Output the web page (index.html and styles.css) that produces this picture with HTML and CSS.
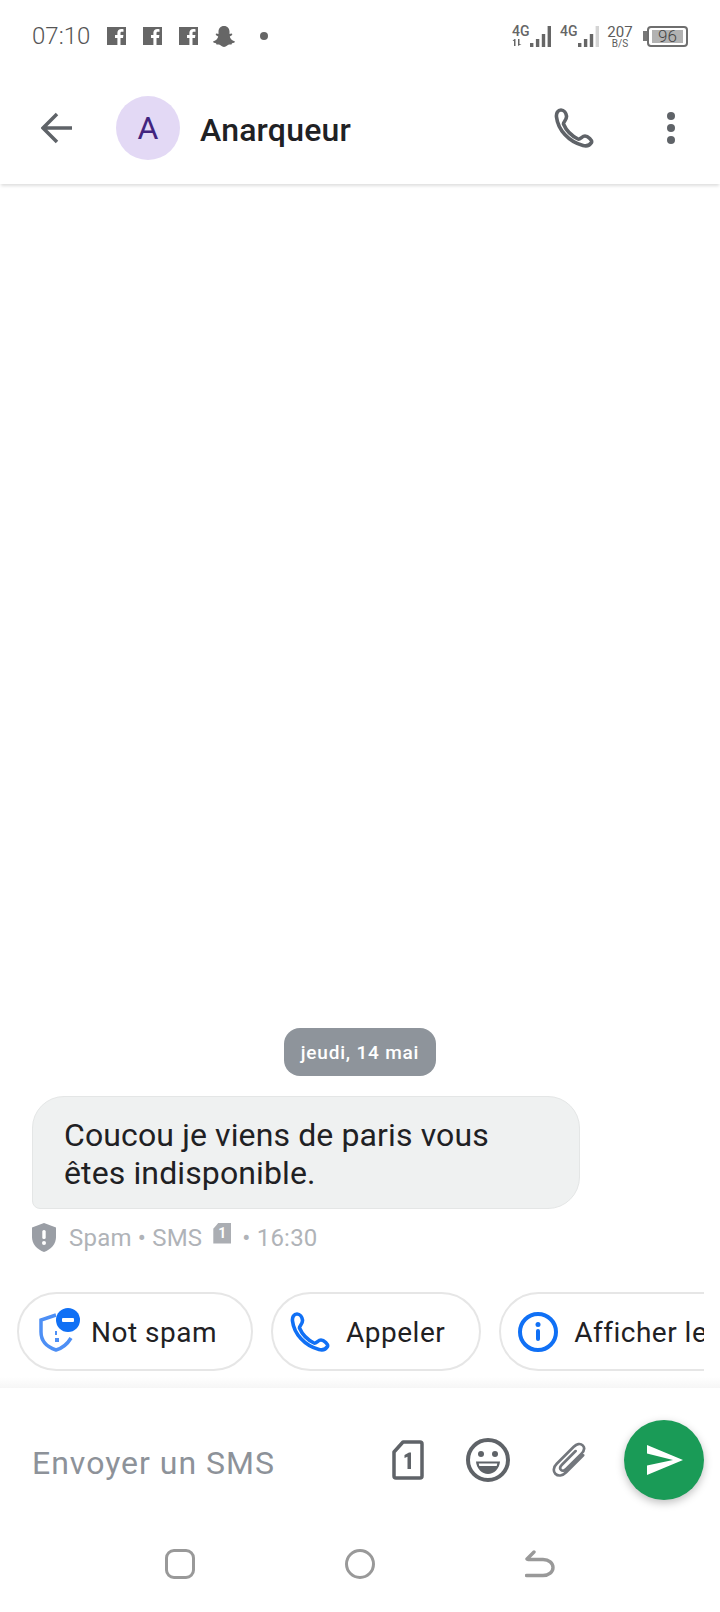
FILE: index.html
```html
<!DOCTYPE html>
<html lang="fr">
<head>
<meta charset="utf-8">
<title>Anarqueur</title>
<link rel="stylesheet" href="styles.css">
</head>
<body>
<svg class="defs" width="0" height="0" aria-hidden="true">
  <symbol id="phone" viewBox="0 0 40 40">
    <path d="M7 2C4 2 2 5 2.500 9C4 22 15 34 29 37.500C33 38.500 36 37 37.500 34.500C38.500 32.500 34 28 31 28C28 28 26 32 24 31C18 28 12 22 9.500 16C9 14 13 12 12.500 8C12 5 10 2 7 2Z" fill="none" stroke="currentColor" stroke-width="3.600" stroke-linejoin="round"/>
  </symbol>
  <symbol id="fb" viewBox="0 0 19 18">
    <path d="M0 0H19V18H13.500V11H16L16.400 8H13.500V6.200C13.500 5.300 13.800 4.800 15 4.800H16.500V2.200C16 2.100 15.200 2 14.300 2C12 2 10.400 3.400 10.400 5.800V8H8V11H10.400V18H0Z" fill="currentColor"/>
  </symbol>
</svg>
<div class="screen">
  <div class="status">
    <span class="time">07:10</span>
    <div class="notifs">
      <svg class="fb"><use href="#fb"/></svg>
      <svg class="fb"><use href="#fb"/></svg>
      <svg class="fb"><use href="#fb"/></svg>
      <svg class="snap" viewBox="0 0 22 21"><path d="M11 0C14.600 0 16.500 2.500 16.500 5.500V8L18.500 7.500C19.500 7.500 19.500 9 18.500 9.500L16.800 10.500C17.200 12.800 19 14.500 21.500 15.300C22.200 15.600 22 16.300 21 16.700L19 17.200L18.500 18.600L16 18.500C14.500 18.500 13.500 21 11 21C8.500 21 7.500 18.500 6 18.500L3.500 18.600L3 17.200L1 16.700C0 16.300 -.2 15.600 .5 15.300C3 14.500 4.800 12.800 5.200 10.500L3.500 9.500C2.500 9 2.500 7.500 3.500 7.500L5.500 8V5.500C5.500 2.500 7.400 0 11 0Z" fill="currentColor"/></svg>
      <span class="notif-dot"></span>
    </div>
    <div class="sys">
      <div class="net">
        <div class="net-label"><span>4G</span><svg class="arrows" viewBox="0 0 10 7"><path d="M2.500 0L.5 2H2V7H3.500V0ZM6 0V7L9.500 5H7.500V0Z" fill="currentColor"/></svg></div>
        <svg class="bars" viewBox="0 0 21 21"><rect x="0" y="17" width="3.400" height="4"/><rect x="5.900" y="13" width="3.400" height="8"/><rect x="11.800" y="8" width="3.400" height="13"/><rect x="17.600" y="0" width="3.400" height="21"/></svg>
      </div>
      <div class="net">
        <div class="net-label"><span>4G</span><i class="arrows-empty"></i></div>
        <svg class="bars" viewBox="0 0 21 21"><rect x="0" y="17" width="3.400" height="4"/><rect x="5.900" y="13" width="3.400" height="8"/><rect x="11.800" y="8" width="3.400" height="13"/><rect class="off" x="17.600" y="0" width="3.400" height="21"/></svg>
      </div>
      <div class="speed"><span class="speed-val">207</span><span class="speed-unit">B/S</span></div>
      <div class="battery"><i class="nub"></i><div class="cell"><span class="level">96</span></div></div>
    </div>
  </div>

  <header class="header">
    <svg class="back" viewBox="0 0 32 32"><path d="M31 16H3M16 2L2 16L16 30" fill="none" stroke="currentColor" stroke-width="3.500"/></svg>
    <div class="avatar">A</div>
    <div class="name">Anarqueur</div>
    <svg class="call"><use href="#phone"/></svg>
    <div class="more"><i></i><i></i><i></i></div>
  </header>

  <main class="chat">
    <div class="date">jeudi, 14 mai</div>
    <div class="bubble">Coucou je viens de paris vous êtes indisponible.</div>
    <div class="meta">
      <svg class="shield" viewBox="0 0 24 29"><path d="M12 0L24 4.500V14C24 21 19 26.500 12 29C5 26.500 0 21 0 14V4.500Z" fill="currentColor"/><rect x="10.300" y="7" width="3.400" height="9" rx="1.500" fill="#fff"/><circle cx="12" cy="20" r="2" fill="#fff"/></svg>
      <span>Spam • SMS</span>
      <span class="sim-mini">1</span>
      <span>• 16:30</span>
    </div>
  </main>

  <div class="chips">
    <div class="chip">
      <svg class="chip-shield" viewBox="0 0 44 44"><path d="M20 7L5 12V24C5 33 11 39 20 42C27 40 32 35 35 30" fill="none" stroke="#4d8ff5" stroke-width="3.500"/><rect x="19" y="23" width="2" height="4" fill="#4d8ff5"/><rect x="19" y="30" width="4" height="4" fill="#4d8ff5"/><circle cx="32" cy="12" r="12" fill="#1070f5"/><rect x="26" y="10" width="12" height="4" rx="1" fill="#fff"/></svg>
      <span class="chip-label">Not spam</span>
    </div>
    <div class="chip">
      <svg class="chip-phone"><use href="#phone"/></svg>
      <span class="chip-label">Appeler</span>
    </div>
    <div class="chip">
      <svg class="chip-info" viewBox="0 0 40 40"><circle cx="20" cy="20" r="18" fill="none" stroke="currentColor" stroke-width="4"/><circle cx="20" cy="12.500" r="2.500" fill="currentColor"/><rect x="18" y="17" width="4" height="12" rx="2" fill="currentColor"/></svg>
      <span class="chip-label">Afficher les détails</span>
    </div>
  </div>
  <div class="fade"></div>

  <div class="composer">
    <span class="placeholder">Envoyer un SMS</span>
    <svg class="tool-sim" viewBox="0 0 32 40"><path d="M11 2H28C29.100 2 30 2.900 30 4V36C30 37.100 29.100 38 28 38H4C2.900 38 2 37.100 2 36V12Z" fill="none" stroke="currentColor" stroke-width="3.500" stroke-linejoin="round"/><path d="M12.500 15L17 12.500H19V29H15.500V16.800L12.500 18Z" fill="currentColor"/></svg>
    <svg class="tool-emoji" viewBox="0 0 44 44"><circle cx="22" cy="22" r="20" fill="none" stroke="currentColor" stroke-width="4"/><circle cx="15" cy="16" r="3" fill="currentColor"/><circle cx="29" cy="16" r="3" fill="currentColor"/><path d="M10 23.500H34C33.500 30.500 28 36 22 36C16 36 10.500 30.500 10 23.500Z" fill="currentColor"/><path d="M12.700 25.500H31.300L30.700 28H13.300Z" fill="#fff"/></svg>
    <svg class="tool-clip" viewBox="0 0 36 40"><path d="M33 15L15 33C11 37 6.500 37.500 3.500 34.500C1 32 1.500 27.500 5 24L23 6C26 3 30 2 32.500 4.500C35 7 34 10.500 31 13.500L15 29.500C13 31.500 11 32 9.500 30.500C8 29 8.500 27 10.500 25L25 10.500" fill="none" stroke="currentColor" stroke-width="2.800" stroke-linecap="round"/></svg>
    <div class="send">
      <svg class="send-arrow" viewBox="0 0 36 30"><path d="M0 0L36 15L0 30V20.500L26 15L0 8.500Z" fill="#fff"/></svg>
    </div>
  </div>

  <nav class="nav">
    <span class="nav-square"></span>
    <span class="nav-circle"></span>
    <svg class="nav-back" viewBox="0 0 30 30"><path d="M1.500 26.500H18C24 26.500 28 23 28 18.500C28 14 24 10.500 18 10.500H3M9 3L2 10" fill="none" stroke="currentColor" stroke-width="3.400" stroke-linecap="round"/></svg>
  </nav>
</div>
</body>
</html>
```
FILE: styles.css
```css
* { box-sizing: border-box; }
html, body { margin: 0; padding: 0; background: #fff; }
body { font-family: Roboto, "Liberation Sans", sans-serif; color: #1f2124; }
.defs { position: absolute; }
.screen { width: 720px; height: 1612px; display: flex; flex-direction: column; overflow: hidden; }

.status { height: 72px; flex: none; display: flex; align-items: center; padding: 0 32px; color: #666; }
.time { font-size: 24px; font-weight: 300; width: 75px; color: #555; }
.notifs { display: flex; align-items: center; gap: 17px; flex: 1; }
.fb { width: 19px; height: 18px; }
.snap { width: 22px; height: 21px; margin-left: -2px; }
.notif-dot { width: 8px; height: 8px; border-radius: 50%; background: #666; margin-left: 8px; }
.sys { display: flex; align-items: center; }
.net { display: flex; align-items: flex-end; margin-right: 9px; }
.net-label { width: 18px; height: 22px; display: flex; flex-direction: column; font-size: 14px; font-weight: 500; line-height: 13px; }
.arrows { width: 10px; height: 7px; margin-top: 1px; }
.arrows-empty { display: block; height: 7px; }
.bars { width: 21px; height: 21px; fill: #666; }
.bars .off { fill: #d4d4d4; }
.speed { width: 24px; display: flex; flex-direction: column; align-items: center; margin-right: 11px; line-height: 1; color: #5c5c5c; }
.speed-val { font-size: 15px; line-height: 14px; }
.speed-unit { font-size: 10px; line-height: 9px; }
.battery { display: flex; align-items: center; }
.nub { width: 4px; height: 10px; background: #777; }
.cell { width: 41px; height: 21px; border: 2px solid #6e6e6e; border-radius: 4px; padding: 2px 3px; display: flex; }
.level { flex: 1; background: #b2b2b2; color: #444; font-size: 17px; font-weight: 300; line-height: 13px; text-align: center; }

.header { height: 112px; flex: none; display: flex; align-items: center; padding-left: 41px; background: #fff; box-shadow: 0 3px 3px -1px rgba(0,0,0,.13); position: relative; }
.back { width: 32px; height: 32px; color: #5f6368; }
.avatar { width: 64px; height: 64px; border-radius: 50%; background: #e3d9f5; color: #42247f; font-size: 32px; display: flex; align-items: center; justify-content: center; margin-left: 43px; }
.name { font-size: 32px; font-weight: 500; margin-left: 20px; margin-top: 3px; flex: 1; letter-spacing: .2px; }
.call { width: 40px; height: 40px; color: #5f6368; margin-right: 73px; }
.more { display: flex; flex-direction: column; gap: 4px; margin-right: 45px; }
.more i { width: 8px; height: 8px; border-radius: 50%; background: #5f6368; }

.chat { flex: 1; display: flex; flex-direction: column; justify-content: flex-end; padding: 0 32px 40px; }
.date { align-self: center; height: 48px; padding: 0 17px; border-radius: 16px; background: #8e949b; color: #fff; font-size: 19px; font-weight: 500; letter-spacing: .8px; display: flex; align-items: center; }
.bubble { width: 548px; margin-top: 20px; padding: 19px 31px 16px; border: 1.500px solid #e4e6e6; border-radius: 32px 32px 32px 8px; background: #eff1f1; font-size: 32px; line-height: 38px; letter-spacing: .12px; }
.meta { display: flex; align-items: center; gap: 11px; margin-top: 14px; height: 29px; color: #b0b3b8; font-size: 24px; letter-spacing: .2px; }
.shield { width: 24px; height: 29px; margin-right: 2px; color: #9a9ea5; }
.sim-mini { width: 18px; height: 21px; margin-top: -9px; background: #abaeb3; color: #fff; font-size: 14px; font-weight: 700; text-align: center; line-height: 21px; clip-path: polygon(30% 0, 100% 0, 100% 100%, 0 100%, 0 30%); }

.chips { flex: none; display: flex; gap: 18px; margin: 0 16px 0 17px; overflow: hidden; height: 79px; }
.chip { flex: none; height: 79px; display: flex; align-items: center; padding: 0 34px 0 17px; border: 2px solid #e6e6e6; border-radius: 40px; background: #fff; font-size: 28px; letter-spacing: .5px; white-space: nowrap; gap: 16px; }
.chip-label { padding-top: 2px; }
.chip-shield { width: 44px; height: 44px; margin-top: -4px; margin-right: -5px; }
.chip-phone { width: 40px; height: 40px; color: #1070f5; }
.chip-info { width: 40px; height: 40px; color: #1070f5; }

.fade { flex: none; height: 11px; margin-top: 6px; background: linear-gradient(#fff, #f6f6f6); }

.composer { flex: none; height: 132px; padding: 12px 16px 0 32px; display: flex; align-items: center; }
.placeholder { font-size: 32px; letter-spacing: 1px; color: #8d9299; flex: 1; padding-top: 6px; }
.tool-sim { width: 32px; height: 40px; color: #5f6368; }
.tool-emoji { width: 44px; height: 44px; color: #5f6368; margin-left: 42px; }
.tool-clip { width: 34px; height: 38px; color: #73777d; margin-left: 42px; }
.send { width: 80px; height: 80px; border-radius: 50%; background: #1a9b57; box-shadow: 0 3px 8px rgba(0,0,0,.25); display: flex; align-items: center; justify-content: center; margin-left: 38px; }
.send-arrow { width: 36px; height: 30px; margin-left: 1px; }

.nav { flex: none; height: 92px; display: flex; align-items: center; color: #999; padding: 0 0 4px 165px; }
.nav-square { width: 30px; height: 30px; border: 3.500px solid #999; border-radius: 9px; }
.nav-circle { width: 30px; height: 30px; border: 3.500px solid #999; border-radius: 50%; margin-left: 150px; }
.nav-back { width: 30px; height: 30px; margin-left: 150px; }
```
